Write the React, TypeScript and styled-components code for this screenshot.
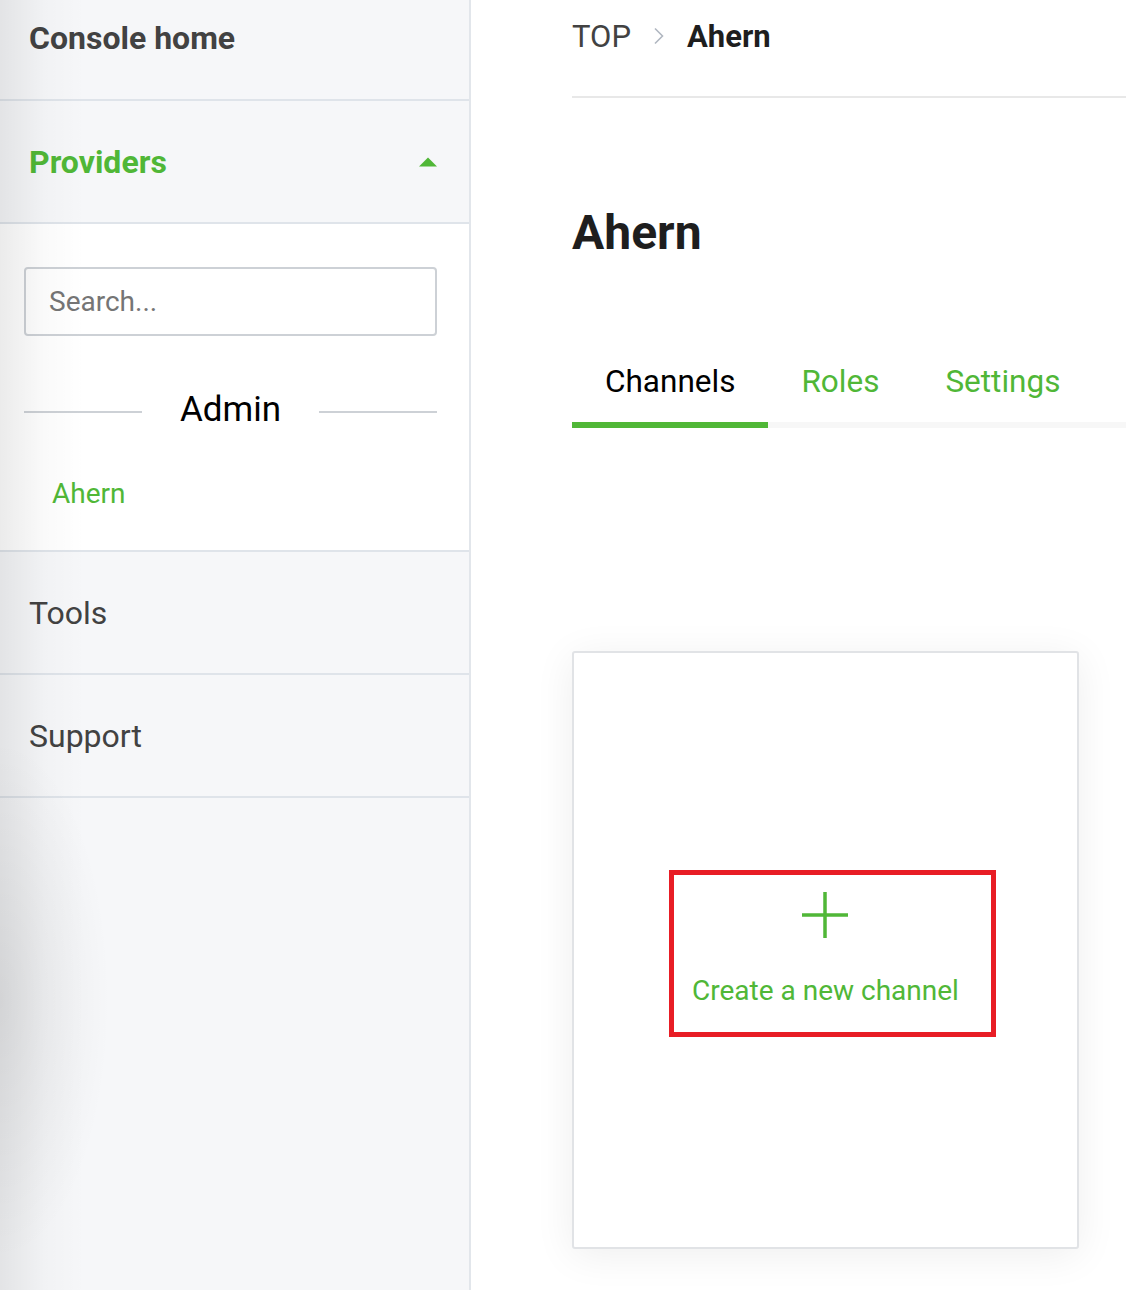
import styled, { createGlobalStyle } from 'styled-components';

const GREEN = '#50b737';

const GlobalStyle = createGlobalStyle`
  html, body {
    margin: 0;
    padding: 0;
    background: #ffffff;
  }
  body {
    font-family: Roboto, "Liberation Sans", Arial, sans-serif;
    -webkit-font-smoothing: antialiased;
  }
  * {
    box-sizing: border-box;
  }
`;

function CaretUp() {
  return (
    <svg width="18" height="10" viewBox="0 0 18 10">
      <path d="M0 9.5 L9 0.5 L18 9.5 Z" fill={GREEN} />
    </svg>
  );
}

function Chevron() {
  return (
    <svg width="12" height="18" viewBox="0 0 12 18">
      <path d="M2 1.5 L9.5 9 L2 16.5" fill="none" stroke="#b0b7c0" strokeWidth="1.6" />
    </svg>
  );
}

function Plus() {
  return (
    <svg width="46" height="46" viewBox="0 0 46 46">
      <path d="M23 0 V46 M0 23 H46" stroke={GREEN} strokeWidth="3.5" />
    </svg>
  );
}

export default function App() {
  return (
    <>
      <GlobalStyle />
      <Page>
        <Sidebar>
          <NavRow $pushUp>
            <NavLabel $bold>Console home</NavLabel>
          </NavRow>
          <NavRow>
            <NavLabel $bold $active>Providers</NavLabel>
            <CaretUp />
          </NavRow>
          <Expanded>
            <SearchInput placeholder="Search..." />
            <GroupDivider>
              <Rule />
              <GroupTitle>Admin</GroupTitle>
              <Rule />
            </GroupDivider>
            <ProviderLink>Ahern</ProviderLink>
          </Expanded>
          <NavRow>
            <NavLabel>Tools</NavLabel>
          </NavRow>
          <NavRow>
            <NavLabel>Support</NavLabel>
          </NavRow>
        </Sidebar>

        <Main>
          <Breadcrumb>
            <Crumb>TOP</Crumb>
            <Chevron />
            <Crumb $current>Ahern</Crumb>
          </Breadcrumb>

          <PageTitle>Ahern</PageTitle>

          <Tabs>
            <Tab $active>Channels</Tab>
            <Tab>Roles</Tab>
            <Tab>Settings</Tab>
          </Tabs>

          <Card>
            <CreateButton>
              <Plus />
              <CreateLabel>Create a new channel</CreateLabel>
            </CreateButton>
          </Card>
        </Main>
      </Page>
    </>
  );
}

const Page = styled.div`
  display: flex;
  min-height: 1290px;
  width: 1126px;
  overflow: hidden;
`;

// sombra à esquerda da barra lateral
const Sidebar = styled.aside`
  position: relative;
  flex: 0 0 471px;
  background: #f6f7f9;
  border-right: 2px solid #e2e6eb;
  display: flex;
  flex-direction: column;

  &::before {
    content: '';
    position: absolute;
    inset: 0;
    pointer-events: none;
    background:
      radial-gradient(ellipse 110px 260px at 0 1000px, rgba(0, 0, 0, 0.07), rgba(0, 0, 0, 0)),
      linear-gradient(to right, rgba(0, 0, 0, 0.08), rgba(0, 0, 0, 0.02) 45px, rgba(0, 0, 0, 0) 85px);
  }
`;

const NavRow = styled.div<{ $pushUp?: boolean }>`
  height: ${(props) => (props.$pushUp ? '101px' : '123px')};
  padding: 0 32px ${(props) => (props.$pushUp ? '24px' : '0')} 29px;
  display: flex;
  align-items: center;
  justify-content: space-between;
  border-bottom: 2px solid #dfe4ea;
`;

const NavLabel = styled.span<{ $bold?: boolean; $active?: boolean }>`
  font-size: 32px;
  font-weight: ${(props) => (props.$bold ? 700 : 400)};
  color: ${(props) => (props.$active ? GREEN : '#424242')};
`;

const Expanded = styled.div`
  background: #ffffff;
  height: 328px;
  padding: 43px 32px 0 24px;
  border-bottom: 2px solid #dfe4ea;
  display: flex;
  flex-direction: column;
`;

const SearchInput = styled.input`
  width: 413px;
  height: 69px;
  border: 2px solid #cdd1d6;
  border-radius: 4px;
  padding: 0 23px;
  font-family: inherit;
  font-size: 28px;
  color: #333;
  background: #fff;
  outline: none;

  &::placeholder {
    color: #757575;
  }
`;

const GroupDivider = styled.div`
  display: flex;
  align-items: center;
  gap: 38px;
  margin-top: 54px;
  height: 44px;
`;

const Rule = styled.div`
  flex: 1;
  height: 2px;
  background: #cdd1d6;
`;

const GroupTitle = styled.span`
  font-size: 35px;
  color: #000;
  margin-top: -6px;
`;

const ProviderLink = styled.a`
  margin: 43px 0 0 28px;
  font-size: 28px;
  line-height: 34px;
  color: ${GREEN};
  cursor: pointer;
`;

const Main = styled.main`
  flex: 1;
  padding-left: 101px;
  display: flex;
  flex-direction: column;
  align-items: flex-start;
`;

const Breadcrumb = styled.nav`
  align-self: stretch;
  height: 98px;
  padding-bottom: 24px;
  display: flex;
  align-items: center;
  gap: 22px;
  border-bottom: 2px solid #e8e8e8;
`;

const Crumb = styled.span<{ $current?: boolean }>`
  font-size: 31px;
  font-weight: ${(props) => (props.$current ? 700 : 400)};
  color: ${(props) => (props.$current ? '#1e1e1e' : '#424242')};
`;

const PageTitle = styled.h1`
  margin: 107px 0 0;
  font-size: 48px;
  line-height: 56px;
  font-weight: 700;
  color: #1e1e1e;
`;

const Tabs = styled.div`
  align-self: stretch;
  margin-top: 102px;
  display: flex;
  border-bottom: 6px solid #f7f7f7;
`;

const Tab = styled.div<{ $active?: boolean }>`
  position: relative;
  padding: 0 33px 21px;
  font-size: 31.5px;
  line-height: 38px;
  color: ${(props) => (props.$active ? '#000' : GREEN)};
  cursor: pointer;

  &::after {
    content: '';
    position: absolute;
    left: 0;
    right: 0;
    bottom: -6px;
    height: 6px;
    background: ${(props) => (props.$active ? GREEN : 'transparent')};
  }
`;

const Card = styled.section`
  margin-top: 223px;
  width: 507px;
  height: 598px;
  background: #fff;
  border: 2px solid #e1e3e6;
  border-radius: 3px;
  box-shadow: 0 6px 40px rgba(0, 0, 0, 0.07);
  display: flex;
  align-items: center;
  justify-content: center;
  padding: 7px 0 0 14px;
`;

// moldura vermelha de destaque em volta do botão
const CreateButton = styled.button`
  height: 167px;
  border: 5px solid #e81d25;
  background: #fff;
  padding: 17px 32px 0 18px;
  display: flex;
  flex-direction: column;
  align-items: center;
  cursor: pointer;
  font-family: inherit;
`;

const CreateLabel = styled.span`
  margin-top: 37px;
  font-size: 28px;
  line-height: 32px;
  color: ${GREEN};
  white-space: nowrap;
`;
